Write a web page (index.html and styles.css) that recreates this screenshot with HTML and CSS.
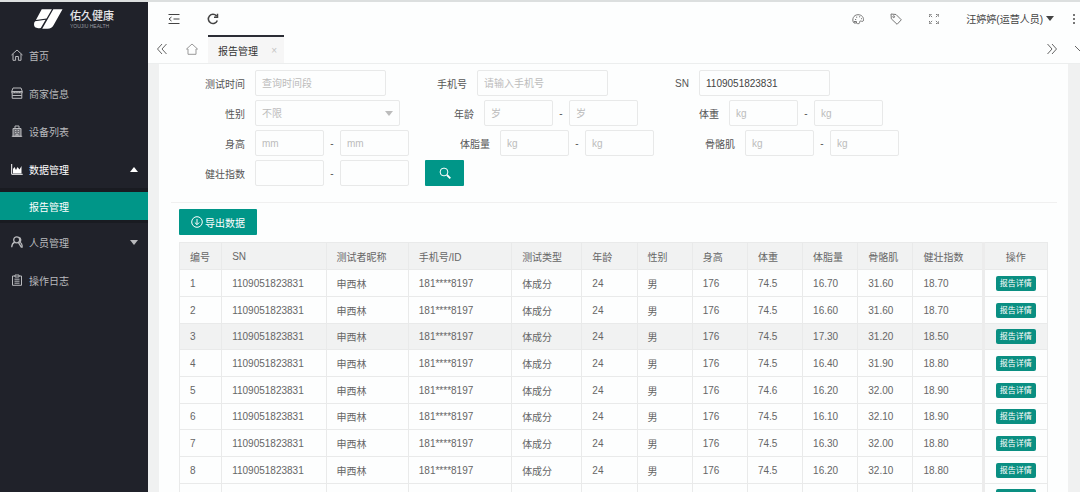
FILE: index.html
```
<!DOCTYPE html>
<html lang="zh-CN">
<head>
<meta charset="utf-8">
<title>报告管理</title>
<link rel="stylesheet" href="styles.css">
</head>
<body>
<div class="app">
  <aside class="side">
    <div class="logo">
      <svg class="logo-mark" viewBox="0 0 30 20"><path fill="#fff" d="M8 0H18.500L13 9.500L2 11zM20 0H29.500L20.500 16Q18.500 20 14 20H8.500zM1.200 12.300L12 10.800L7 19.200Q0 20.500 0 15.500Q0 13.500 1.200 12.300z"/></svg>
      <div class="logo-text"><strong>佑久健康</strong><small>YOUJIU HEALTH</small></div>
    </div>
    <nav class="nav">
      <a class="nav-item" href="#"><svg class="icon" viewBox="0 0 12 12"><path d="M.5 6L6 1l5.500 5M2 5v6.300h2.600V7.500h2.800v3.800H10V5"/></svg>首页</a>
      <a class="nav-item" href="#"><svg class="icon" viewBox="0 0 12 12"><path d="M2 1h8l1.300 3.500v1.300H.7V4.500zM1.200 6v5.300h9.600V6M.7 4.500h10.600M3.500 4.500v1.300M6 4.500v1.300M8.500 4.500v1.300M1.200 8.500h9.600"/></svg>商家信息</a>
      <a class="nav-item" href="#"><svg class="icon" viewBox="0 0 12 12"><path d="M4 3V1h4v2M2 11.300V3.500h8v7.800zM.8 11.300h10.400M4 5.500h1.300M6.700 5.500H8M4 7.500h1.300M6.700 7.500H8M5 11V9.300h2V11" /><path d="M2 4h8v7H2z" fill="currentColor" fill-opacity=".5" stroke="none"/></svg>设备列表</a>
      <a class="nav-item nav-item--open" href="#"><svg class="icon" viewBox="0 0 12 12"><path d="M.7 1v10.300h11"/><path fill="currentColor" stroke="none" d="M2 10.500V6L3.500 4 5 7 6.500 4 8.500 6.500 10.500 3v7.500z"/></svg>数据管理<span class="arrow arrow--up"></span></a>
      <div class="subnav"><a class="subnav-item" href="#">报告管理</a></div>
      <a class="nav-item" href="#"><svg class="icon icon--bold" viewBox="0 0 12 12"><circle cx="5.700" cy="3.800" r="3"/><path d="M3.800 6.200C1.800 7 .8 8.500.7 11.300M7.300 6.300l3 4.700h1.400M8.300 1.300c1.700 1 1.900 3.400.6 4.700 1.400.8 2.200 2.200 2.400 4.300"/></svg>人员管理<span class="arrow"></span></a>
      <a class="nav-item" href="#"><svg class="icon" viewBox="0 0 12 12"><path d="M4 2H1.500v9.300h9V2H8M4 1h4v2H4zM3.500 5.200h5M3.500 7.200h5M3.500 9.200h5"/></svg>操作日志</a>
    </nav>
  </aside>
  <div class="main">
    <header class="topbar">
      <button class="tool" aria-label="收起菜单"><svg class="icon" viewBox="0 0 12 12"><path d="M.5 1.500h11M5.500 6h6M.5 10.500h11M3.500 4L1 6l2.500 2"/></svg></button>
      <button class="tool tool--refresh" aria-label="刷新"><svg class="icon" viewBox="0 0 12 12"><path stroke-width="1.500" d="M10.300 7.500A4.600 4.600 0 1 1 9.500 3M10.500.8v3.400H7"/></svg></button>
      <div class="topbar-right">
        <button class="tool" aria-label="主题"><svg class="icon" viewBox="0 0 12 12"><path d="M1.500 9.500C-.2 6.500 1.300 1.800 6 1.700c4 0 6.300 3 5.200 6.300-.7 1.300-2.400-.6-3.300.2-.8.800.3 2-1 2.400-1 .2-1.900 0-2.400-.5"/><path d="M3 6.500h1.200M4 4.200h1.200M7 3.800h1.200M9 5.700h1M2 8.500h2.500v1.500H2z"/></svg></button>
        <button class="tool" aria-label="便签"><svg class="icon" viewBox="0 0 12 12"><path d="M1 1l5 .5 5.300 5.300-4.200 4.500L1.300 5.800z"/><circle cx="3.700" cy="3.700" r=".9"/></svg></button>
        <button class="tool" aria-label="全屏"><svg class="icon" viewBox="0 0 12 12"><path d="M1.500 4V1.500H4M1.500 1.500l3 3M8 1.500h2.500V4M10.500 1.500l-3 3M1.500 8v2.500H4M1.500 10.500l3-3M8 10.500h2.500V8M10.500 10.500l-3-3" stroke-dasharray="1.500 .7"/></svg></button>
        <button class="user">汪婷婷(运营人员)<span class="arrow"></span></button>
        <button class="more" aria-label="更多"><svg viewBox="0 0 4 12"><path fill="currentColor" d="M1 1h2v2H1zM1 5h2v2H1zM1 9h2v2H1z"/></svg></button>
      </div>
    </header>
    <div class="tabs">
      <button class="tool" aria-label="向左"><svg class="icon" viewBox="0 0 12 12"><path d="M6 1L1.500 6 6 11M10.500 1L6 6l4.500 5"/></svg></button>
      <a class="home" href="#" aria-label="首页"><svg class="icon" viewBox="0 0 12 12"><path d="M.5 6L6 1l5.500 5H10v5.300H2V6z"/></svg></a>
      <div class="tab"><a href="#">报告管理</a><button class="close" aria-label="关闭">×</button></div>
      <div class="tabs-right">
        <button class="tool" aria-label="向右"><svg class="icon" viewBox="0 0 12 12"><path d="M1.500 1L6 6l-4.500 5M6 1l4.500 5L6 11"/></svg></button>
        <button class="tool" aria-label="页签操作"><svg class="icon" viewBox="0 0 12 12"><path d="M1 3l5 5 5-5"/></svg></button>
      </div>
    </div>
    <main class="content">
      <section class="card">
        <form class="filters">
          <div class="line">
            <div class="field"><label for="time">测试时间</label><input class="wide" id="time" placeholder="查询时间段"></div>
            <div class="field"><label for="phone">手机号</label><input class="wide" id="phone" placeholder="请输入手机号"></div>
            <div class="field"><label for="sn">SN</label><input class="wide" id="sn" value="1109051823831"></div>
          </div>
          <div class="line">
            <div class="field"><label for="sex">性别</label><div class="select"><select id="sex"><option>不限</option><option>男</option><option>女</option></select><span class="arrow"></span></div></div>
            <div class="field field--tight"><label for="age">年龄</label><input id="age" placeholder="岁"><span class="dash">-</span><input aria-label="年龄上限" placeholder="岁"></div>
            <div class="field"><label for="weight">体重</label><input id="weight" placeholder="kg"><span class="dash">-</span><input aria-label="体重上限" placeholder="kg"></div>
          </div>
          <div class="line">
            <div class="field"><label for="height">身高</label><input id="height" placeholder="mm"><span class="dash">-</span><input aria-label="身高上限" placeholder="mm"></div>
            <div class="field"><label for="fat">体脂量</label><input id="fat" placeholder="kg"><span class="dash">-</span><input aria-label="体脂量上限" placeholder="kg"></div>
            <div class="field"><label for="muscle">骨骼肌</label><input id="muscle" placeholder="kg"><span class="dash">-</span><input aria-label="骨骼肌上限" placeholder="kg"></div>
          </div>
          <div class="line">
            <div class="field"><label for="index">健壮指数</label><input id="index"><span class="dash">-</span><input aria-label="健壮指数上限"></div>
            <button class="btn btn--search" type="button" aria-label="查询"><svg class="icon" viewBox="0 0 12 12"><circle cx="5" cy="5" r="3.900"/><path stroke-width="1.800" d="M8 8l3.300 3.300"/></svg></button>
          </div>
        </form>
        <div class="result">
          <button class="btn" type="button"><svg class="icon" viewBox="0 0 12 12"><circle cx="6" cy="6" r="5.300"/><path d="M6 3v5.500M3.800 6.500L6 8.700l2.200-2.200"/></svg>导出数据</button>
          <table class="grid">
            <colgroup><col class="c-no"><col class="c-sn"><col class="c-name"><col class="c-phone"><col class="c-type"><col class="c-num"><col class="c-num"><col class="c-num"><col class="c-num"><col class="c-num"><col class="c-num"><col class="c-type"><col class="c-act"></colgroup>
            <thead><tr><th>编号</th><th>SN</th><th>测试者昵称</th><th>手机号/ID</th><th>测试类型</th><th>年龄</th><th>性别</th><th>身高</th><th>体重</th><th>体脂量</th><th>骨骼肌</th><th>健壮指数</th><th class="act">操作</th></tr></thead>
            <tbody>
              <tr><td>1</td><td>1109051823831</td><td>申西林</td><td>181****8197</td><td>体成分</td><td>24</td><td>男</td><td>176</td><td>74.5</td><td>16.70</td><td>31.60</td><td>18.70</td><td class="act"><button class="detail">报告详情</button></td></tr>
              <tr><td>2</td><td>1109051823831</td><td>申西林</td><td>181****8197</td><td>体成分</td><td>24</td><td>男</td><td>176</td><td>74.5</td><td>16.60</td><td>31.60</td><td>18.70</td><td class="act"><button class="detail">报告详情</button></td></tr>
              <tr class="current"><td>3</td><td>1109051823831</td><td>申西林</td><td>181****8197</td><td>体成分</td><td>24</td><td>男</td><td>176</td><td>74.5</td><td>17.30</td><td>31.20</td><td>18.50</td><td class="act"><button class="detail">报告详情</button></td></tr>
              <tr><td>4</td><td>1109051823831</td><td>申西林</td><td>181****8197</td><td>体成分</td><td>24</td><td>男</td><td>176</td><td>74.5</td><td>16.40</td><td>31.90</td><td>18.80</td><td class="act"><button class="detail">报告详情</button></td></tr>
              <tr><td>5</td><td>1109051823831</td><td>申西林</td><td>181****8197</td><td>体成分</td><td>24</td><td>男</td><td>176</td><td>74.6</td><td>16.20</td><td>32.00</td><td>18.90</td><td class="act"><button class="detail">报告详情</button></td></tr>
              <tr><td>6</td><td>1109051823831</td><td>申西林</td><td>181****8197</td><td>体成分</td><td>24</td><td>男</td><td>176</td><td>74.5</td><td>16.10</td><td>32.10</td><td>18.90</td><td class="act"><button class="detail">报告详情</button></td></tr>
              <tr><td>7</td><td>1109051823831</td><td>申西林</td><td>181****8197</td><td>体成分</td><td>24</td><td>男</td><td>176</td><td>74.5</td><td>16.30</td><td>32.00</td><td>18.80</td><td class="act"><button class="detail">报告详情</button></td></tr>
              <tr><td>8</td><td>1109051823831</td><td>申西林</td><td>181****8197</td><td>体成分</td><td>24</td><td>男</td><td>176</td><td>74.5</td><td>16.20</td><td>32.10</td><td>18.80</td><td class="act"><button class="detail">报告详情</button></td></tr>
              <tr><td></td><td></td><td></td><td></td><td></td><td></td><td></td><td></td><td></td><td></td><td></td><td></td><td class="act"><button class="detail" aria-label="报告详情"></button></td></tr>
            </tbody>
          </table>
        </div>
      </section>
    </main>
  </div>
</div>
</body>
</html>
```
FILE: styles.css
```
* { box-sizing: border-box; }
body { margin: 0; }
body, button, input, select {
  font-family: "Liberation Sans", "Noto Sans CJK SC", sans-serif;
  font-size: 10px;
}
button { border: 0; padding: 0; background: none; color: inherit; cursor: pointer; }
a { color: inherit; text-decoration: none; }

.app {
  display: flex;
  height: 100vh;
  overflow: hidden;
  border-top: 2px solid #dcdfdf;
  color: #555;
}
.icon {
  flex: none;
  width: 12px;
  height: 12px;
  fill: none;
  stroke: currentColor;
}
.icon--bold { stroke-width: 1.3; }
.arrow {
  border: 4px solid transparent;
  border-top: 5px solid currentColor;
  border-bottom: 0;
}
.arrow--up { border-top: 0; border-bottom: 5px solid currentColor; }

.side { flex: none; width: 148px; background: #20222a; color: #b9babd; }
.logo { display: flex; align-items: center; gap: 7px; height: 34px; padding-left: 34px; }
.logo-mark { width: 29px; height: 20px; }
.logo-text { display: flex; flex-direction: column; gap: 2px; color: #e6e6e8; }
.logo-text strong { font-size: 11px; line-height: 12px; font-weight: 500; }
.logo-text small { font-size: 5px; line-height: 5px; color: #9a9ba0; }
.nav-item { display: flex; align-items: center; gap: 6px; height: 38px; padding: 0 10px 0 11px; }
.nav-item .arrow { margin-left: auto; }
.nav-item--open { color: #fff; }
.subnav { padding: 4px 0 3px; background: #191b21; }
.subnav-item { display: flex; align-items: center; height: 28px; padding-left: 29px; background: #009688; color: #fff; }

.main { flex: 1; min-width: 0; display: flex; flex-direction: column; overflow: hidden; }
.topbar { display: flex; align-items: center; height: 33px; padding-left: 20px; background: #fdfefe; color: #444; }
.tool { display: flex; }
.tool--refresh { margin-left: 27px; }
.topbar-right { display: flex; align-items: center; margin-left: auto; padding-right: 4px; color: #777; }
.topbar-right .tool { margin-right: 26px; }
.topbar-right .user { display: flex; align-items: center; gap: 3px; margin-right: 18px; color: #444; }
.more { display: flex; width: 4px; }
.more svg { width: 4px; height: 12px; }

.tabs { display: flex; align-items: center; height: 29px; padding-left: 8px; border-bottom: 1px solid #eceeee; background: #fdfefe; color: #666; }
.home { display: flex; margin: 0 10px 0 18px; color: #999; }
.tab { display: flex; align-items: center; justify-content: space-between; width: 76px; height: 28px; padding: 0 7px 0 10px; border-top: 2px solid #2b2d35; background: #f6f6f6; color: #333; }
.close { color: #c4c4c4; }
.tabs-right { display: flex; gap: 16px; margin: 0 -6px 0 auto; }

.content { flex: 1; min-height: 0; padding: 0 12px 0 11px; background: #f0f1f1; }
.card { height: 100%; overflow: hidden; background: #fdfefe; }
.filters { display: flex; flex-direction: column; gap: 4px; margin: 0 11px 0 12px; padding: 6px 0 16px 3px; border-bottom: 1px solid #f0f0f0; }
.line { display: flex; gap: 10px; }
.field { display: flex; align-items: center; }
.field label { width: 81px; padding-right: 10px; text-align: right; }
.field--tight label { width: 74px; }
.field input, .select select {
  width: 69px;
  height: 26px;
  padding: 0 6px;
  border: 1px solid #e8e9e9;
  border-radius: 2px;
  background: transparent;
  color: #444;
}
.field .wide { width: 131px; }
.field input::placeholder { color: #bcbcbc; }
.dash { width: 16px; text-align: center; }
.select { display: grid; align-items: center; color: #bcbcbc; }
.select > * { grid-area: 1 / 1; }
.select select { width: 145px; appearance: none; color: #bcbcbc; }
.select .arrow { justify-self: end; margin-right: 7px; pointer-events: none; }
.btn { display: flex; align-items: center; justify-content: center; gap: 2px; width: 78px; height: 26px; border-radius: 1px; background: #009688; color: #fff; }
.btn--search { width: 39px; margin-left: 6px; }

.result { padding: 6px 20px 0; }
.grid { width: 100%; margin-top: 7px; border-collapse: collapse; table-layout: fixed; color: #666; }
.c-no { width: 42px; }
.c-sn { width: 104px; }
.c-name { width: 82px; }
.c-phone { width: 103px; }
.c-type { width: 70px; }
.c-num { width: 55px; }
.c-act { width: 64px; }
.grid th, .grid td { height: 27px; padding: 0 0 0 10px; border: 1px solid #e9eaea; font-weight: 400; text-align: left; white-space: nowrap; }
.grid tbody tr:nth-child(3n) td { height: 26px; }
.grid th, .current { background: #f1f2f2; }
.grid .act { padding: 0; border-left: 3px solid #ececec; text-align: center; }
.detail { display: block; width: 40px; height: 15px; margin: 0 auto; border-radius: 2px; background: #0a8f82; color: #fff; font-size: 8px; line-height: 15px; }
```
